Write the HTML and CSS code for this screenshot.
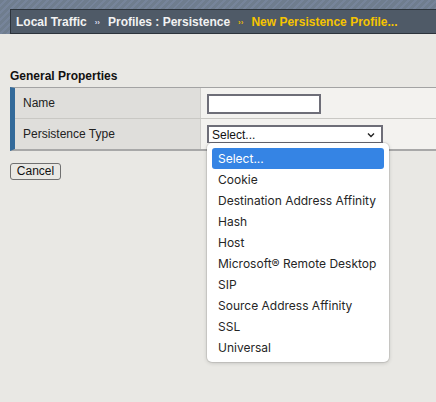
FILE: index.html
```html
<!DOCTYPE html>
<html>
<head>
<meta charset="utf-8">
<link rel="stylesheet" href="styles.css">
</head>
<body>
<div class="top">
  <div class="crumbs">
    <span class="crumb">Local Traffic</span>
    <span class="sep">››</span>
    <span class="crumb">Profiles : Persistence</span>
    <span class="sep sep-cur">››</span>
    <span class="crumb current">New Persistence Profile...</span>
  </div>
</div>
<div class="main">
  <div class="section-title">General Properties</div>
  <div class="props">
    <div class="row">
      <div class="label">Name</div>
      <div class="value"><span class="textbox"></span></div>
    </div>
    <div class="row last">
      <div class="label">Persistence Type</div>
      <div class="value">
        <div class="select">
          <span>Select...</span>
          <svg class="chev" width="8" height="6" viewBox="0 0 8 6"><path d="M1 1.5 L4 4.5 L7 1.5" fill="none" stroke="#222" stroke-width="1.4"/></svg>
        </div>
      </div>
    </div>
  </div>
  <div class="actions"><span class="btn">Cancel</span></div>
  <div class="popup">
    <div class="opt sel">Select...</div>
    <div class="opt">Cookie</div>
    <div class="opt">Destination Address Affinity</div>
    <div class="opt">Hash</div>
    <div class="opt">Host</div>
    <div class="opt">Microsoft® Remote Desktop</div>
    <div class="opt">SIP</div>
    <div class="opt">Source Address Affinity</div>
    <div class="opt">SSL</div>
    <div class="opt">Universal</div>
  </div>
</div>
</body>
</html>
```
FILE: styles.css
```css
html, body {
  margin: 0;
  padding: 0;
}
body {
  background: #e9e8e4;
  font-family: "Liberation Sans", Arial, sans-serif;
  font-size: 12px;
  color: #222;
  width: 436px;
  height: 402px;
  overflow: hidden;
  position: relative;
}
.top {
  padding: 9px 0 0 10px;
  box-sizing: border-box;
  height: 34px;
  background: repeating-linear-gradient(135deg, #6f7d8e 0px, #6f7d8e 3px, #76849a 3px, #76849a 5px);
}
.crumbs {
  box-sizing: border-box;
  height: 25px;
  background: #4f5a67;
  border: 1px solid #2c333b;
  border-right: none;
  display: flex;
  align-items: center;
  padding-left: 5px;
  font-weight: bold;
  font-size: 12px;
  color: #f2f2f2;
  white-space: nowrap;
}
.sep {
  font-size: 8px;
  margin: 0 8px 0 8px;
  color: #dde;
  position: relative;
  top: 1px;
}
.sep-cur { color: #e8b800; }
.current { color: #f6c400; }
.main {
  padding: 0 0 0 10px;
}
.section-title {
  font-weight: bold;
  font-size: 12px;
  color: #111;
  margin-top: 35px;
  height: 18px;
  line-height: 14px;
}
.props {
  border-top: 1px solid #a3a3a3;
  border-bottom: 2px solid #a8a8a8;
  border-left: 5px solid #336a9a;
}
.row {
  display: flex;
  height: 30px;
  border-bottom: 1px solid #c9c8c4;
}
.row.last { border-bottom: none; }
.label {
  width: 186px;
  background: #dfdedb;
  border-right: 1px solid #cfcecb;
  padding-left: 8px;
  box-sizing: border-box;
  display: flex;
  align-items: center;
  font-size: 12px;
  color: #222;
}
.value {
  flex: 1;
  background: #f3f2ef;
  display: flex;
  align-items: center;
  padding-left: 6px;
}
.textbox {
  display: block;
  width: 110px;
  height: 16px;
  background: #fff;
  border: 2px solid #6e6e78;
  margin-top: 1px;
}
.select {
  width: 176px;
  height: 18px;
  box-sizing: border-box;
  background: #fff;
  border: 2px solid #6e6e78;
  border-bottom-width: 1px;
  display: flex;
  align-items: center;
  justify-content: space-between;
  padding: 0 6px 0 3px;
  font-size: 12px;
  color: #111;
}
.chev { margin-top: 1px; }
.actions {
  margin-top: 12px;
}
.btn {
  display: inline-block;
  box-sizing: border-box;
  width: 51px;
  height: 17px;
  border: 1px solid #707070;
  border-radius: 3px;
  background: #e9e8e4;
  text-align: center;
  line-height: 15px;
  font-size: 12px;
  color: #111;
}
.popup {
  position: absolute;
  left: 207px;
  top: 143px;
  width: 182px;
  box-sizing: border-box;
  padding: 5px 5px 4px 5px;
  background: #fff;
  border-radius: 5px;
  box-shadow: 0 0 0 1px rgba(0,0,0,0.08), 0 1px 4px rgba(0,0,0,0.18);
  font-family: Inter, "Noto Sans", sans-serif;
  font-size: 12px;
  color: #262626;
}
.opt {
  height: 21px;
  line-height: 21px;
  padding-left: 6px;
  white-space: nowrap;
}
.opt.sel {
  background: #3584e4;
  color: #fff;
  border-radius: 3px;
}
```
